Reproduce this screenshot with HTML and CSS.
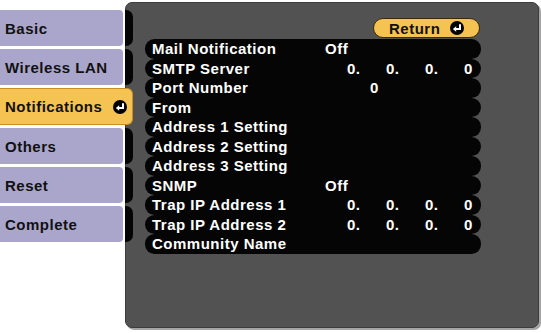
FILE: index.html
```html
<!DOCTYPE html>
<html>
<head>
<meta charset="utf-8">
<link rel="stylesheet" href="styles.css">
</head>
<body>
<div class="screen">
  <nav class="tabs">
    <div class="tab">Basic</div>
    <div class="tab">Wireless LAN</div>
    <div class="tab active">Notifications
      <svg class="enter" viewBox="0 0 14 14" width="14" height="14"><circle cx="7" cy="7" r="7" fill="#000"/><path d="M10 3.2 V8 H5" stroke="#fff" stroke-width="2" fill="none"/><path d="M2.8 8 L6.2 5.2 L6.2 10.8 Z" fill="#fff"/></svg>
    </div>
    <div class="tab">Others</div>
    <div class="tab">Reset</div>
    <div class="tab">Complete</div>
  </nav>
  <section class="panel">
    <div class="panel-head">
      <div class="return">Return
        <svg class="enter" viewBox="0 0 14 14" width="14" height="14"><circle cx="7" cy="7" r="7" fill="#000"/><path d="M10 3.2 V8 H5" stroke="#fff" stroke-width="2" fill="none"/><path d="M2.8 8 L6.2 5.2 L6.2 10.8 Z" fill="#fff"/></svg>
      </div>
    </div>
    <div class="list">
      <div class="row"><span class="label">Mail Notification</span><span class="value">Off</span></div>
      <div class="row"><span class="label">SMTP Server</span><span class="value ip"><span>0.</span><span>0.</span><span>0.</span><span>0</span></span></div>
      <div class="row"><span class="label">Port Number</span><span class="value port">0</span></div>
      <div class="row"><span class="label">From</span></div>
      <div class="row"><span class="label">Address 1 Setting</span></div>
      <div class="row"><span class="label">Address 2 Setting</span></div>
      <div class="row"><span class="label">Address 3 Setting</span></div>
      <div class="row"><span class="label">SNMP</span><span class="value">Off</span></div>
      <div class="row"><span class="label">Trap IP Address 1</span><span class="value ip"><span>0.</span><span>0.</span><span>0.</span><span>0</span></span></div>
      <div class="row"><span class="label">Trap IP Address 2</span><span class="value ip"><span>0.</span><span>0.</span><span>0.</span><span>0</span></span></div>
      <div class="row"><span class="label">Community Name</span></div>
    </div>
  </section>
</div>
</body>
</html>
```

FILE: styles.css
```css
html, body {
  margin: 0;
  padding: 0;
  background: #fff;
}
body {
  font-family: "Liberation Sans", Arial, sans-serif;
  font-weight: bold;
  font-size: 15px;
  letter-spacing: 0.5px;
}
.screen {
  width: 541px;
  height: 333px;
  display: flex;
}
.tabs {
  width: 123px;
  padding-top: 10px;
  display: flex;
  flex-direction: column;
  gap: 3px;
  position: relative;
  z-index: 2;
  flex: none;
}
.tab {
  position: relative;
  height: 36px;
  box-sizing: border-box;
  background: #aaa6cb;
  border-radius: 0 4px 4px 0;
  color: #111;
  padding-left: 5px;
  display: flex;
  align-items: center;
}
.tab::after {
  content: "";
  position: absolute;
  left: 125px;
  top: 0;
  width: 8px;
  height: 100%;
  background: #050505;
  border-radius: 0 7px 7px 0;
}
.tab.active {
  width: 133px;
  height: 37px;
  background: #f5c351;
  border: 1.5px solid #c98f24;
  border-left: none;
  border-radius: 0 6px 6px 0;
}
.tab.active::after {
  display: none;
}
.tab .enter {
  margin-left: 11px;
}
.panel {
  margin-left: 2px;
  margin-top: 2px;
  width: 414px;
  height: 326px;
  box-sizing: border-box;
  background: #525252;
  border: 1px solid #3c3c3c;
  border-radius: 7px;
  box-shadow: 2px 2px 0 #a5a5a5;
  padding: 15px 0 0 19px;
}
.panel-head {
  width: 336px;
  display: flex;
  justify-content: flex-end;
  height: 20px;
  margin-bottom: 1px;
}
.return {
  width: 107px;
  height: 20px;
  box-sizing: border-box;
  background: #f5c351;
  border: 1px solid #3a2c08;
  border-radius: 10px;
  color: #111;
  display: flex;
  align-items: center;
  padding-left: 15px;
  margin-right: 1px;
}
.return .enter {
  margin-left: 10px;
}
.list {
  width: 336px;
  display: flex;
  flex-direction: column;
}
.row {
  height: 19.5px;
  line-height: 19.5px;
  background: #050505;
  border-radius: 9.5px;
  color: #fff;
  display: flex;
  padding-left: 7px;
}
.label {
  width: 173px;
  flex: none;
}
.value {
  display: flex;
}
.value.port {
  padding-left: 45px;
}
.value.ip {
  padding-left: 22px;
}
.value.ip span {
  width: 39px;
}
```
